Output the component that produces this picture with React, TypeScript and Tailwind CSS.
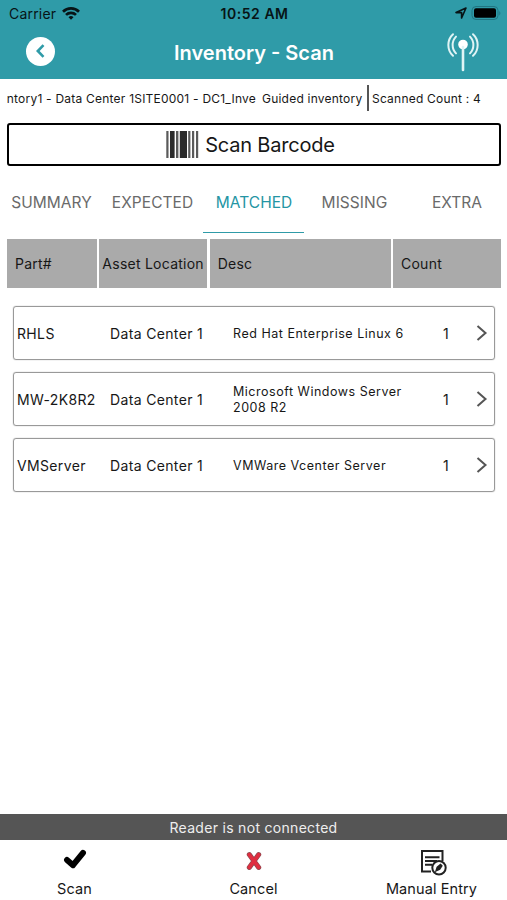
import type { ReactNode } from 'react';

type Item = { part: string; location: string; desc: string; count: number };

const TABS = ['SUMMARY', 'EXPECTED', 'MATCHED', 'MISSING', 'EXTRA'];

const ITEMS: Item[] = [
  { part: 'RHLS', location: 'Data Center 1', desc: 'Red Hat Enterprise Linux 6', count: 1 },
  { part: 'MW-2K8R2', location: 'Data Center 1', desc: 'Microsoft Windows Server 2008 R2', count: 1 },
  { part: 'VMServer', location: 'Data Center 1', desc: 'VMWare Vcenter Server', count: 1 },
];

function WifiIcon() {
  return (
    <svg width="18" height="13" viewBox="0 0 18 13" fill="none" stroke="#071416" strokeWidth="2.7">
      <path d="M1 4.7a11.5 11.5 0 0 1 16 0" />
      <path d="M4 7.9a7.2 7.2 0 0 1 10 0" />
      <path d="M6.5 10.2a3.7 3.7 0 0 1 5 0L9 12.8z" fill="#071416" stroke="none" />
    </svg>
  );
}

function StatusBar() {
  return (
    <div className="grid h-7 grid-cols-3 items-center pl-[9px] pr-[6px] text-[14px] text-[#071416]">
      <div className="flex items-center gap-[6px] pb-px">
        <span className="tracking-[0.2px]">Carrier</span>
        <WifiIcon />
      </div>
      <span className="whitespace-nowrap pr-px pb-px text-center font-semibold tracking-[0.55px]">10:52 AM</span>
      <div className="flex items-center justify-end gap-[4px] pb-[2px]">
        <svg width="12" height="12" viewBox="0 0 12 12" fill="none" stroke="#071416" strokeWidth="1.6" strokeLinejoin="round">
          <path d="M1 5.6 11 1 6.6 11V5.6z" />
        </svg>
        <svg width="30" height="14" viewBox="0 0 30 14">
          <rect x="1" y="0.5" width="26" height="13" rx="4" fill="none" stroke="#217582" />
          <rect x="3" y="2.2" width="22" height="9.6" rx="2" fill="#000" />
          <path d="M28.3 5v4.4c1.4-.8 1.4-3.6 0-4.4" fill="#217582" />
        </svg>
      </div>
    </div>
  );
}

function AntennaIcon() {
  return (
    <svg width="32" height="40" viewBox="0 0 32 40" fill="none" stroke="#e0f4f5" strokeLinecap="round">
      <circle cx="16" cy="12.5" r="4.8" fill="#fff" stroke="none" />
      <path d="M16 15v23" strokeWidth="2.6" />
      <path d="M9 4.6c-4.5 4.6-4.5 12.2 0 16.8M23 4.6c4.5 4.6 4.5 12.2 0 16.8" strokeWidth="2" />
      <path d="M6 2.2c-6.2 5.6-6.2 16 0 21.6M26 2.2c6.2 5.6 6.2 16 0 21.6" strokeWidth="2" />
    </svg>
  );
}

function BarcodeIcon() {
  return (
    <svg width="33" height="27" viewBox="0 0 33 27">
      <path fill="#2b2b2b" d="M4 0h4.6v27H4zM13.8 0h7.2v27h-7.2z" />
      <path fill="#5a5a5a" d="M.3 0h2.2v27H.3zM10 0h2.4v27H10zM22.2 0h2.2v27h-2.2zM26 0h2.2v27H26zM30 0h2.2v27H30z" />
    </svg>
  );
}

function FooterButton({ label, children }: { label: string; children: ReactNode }) {
  return (
    <button className="flex flex-col items-center">
      <span className="flex h-[26px] items-start">{children}</span>
      <span className="mt-[4px] text-[14.5px] leading-5 tracking-[0.1px]">{label}</span>
    </button>
  );
}

export default function App() {
  return (
    <div className="flex h-[900px] w-[507px] flex-col overflow-hidden bg-white font-['Inter',sans-serif] text-[#171717]">
      <header className="h-[79px] shrink-0 bg-[#2f9ba8]">
        <StatusBar />
        <div className="grid h-[48px] grid-cols-[100px_1fr_100px] items-center">
          <button className="ml-[26px] mt-[-2px] flex size-[29px] items-center justify-center rounded-full bg-white">
            <svg className="mr-px" width="9" height="14" viewBox="0 0 9 14" fill="none" stroke="#2f9ba8" strokeWidth="2.6">
              <path d="M7.5 1.2 1.8 7l5.7 5.8" />
            </svg>
          </button>
          <h1 className="pl-px pt-px text-center text-[20px] font-semibold text-white">Inventory - Scan</h1>
          <div className="ml-[40px]">
            <AntennaIcon />
          </div>
        </div>
      </header>

      <div className="flex h-[44px] shrink-0 items-center pl-[7px] pb-[6px] text-[12px] tracking-[0.22px]">
        <div className="flex w-[249px] justify-end overflow-hidden whitespace-nowrap pt-[2px]">
          <span>ntory1 - Data Center 1SITE0001 - DC1_Inve</span>
        </div>
        <span className="ml-[6px] w-[105px] whitespace-nowrap pt-[2px]">Guided inventory</span>
        <span className="h-[26px] w-[2px] bg-[#555]" />
        <span className="ml-[3px] whitespace-nowrap pt-[2px]">Scanned Count : 4</span>
      </div>

      <button className="mx-[7px] flex h-[43px] w-[494px] shrink-0 items-center justify-center gap-[6px] rounded-[3px] border-2 border-black pr-[7px] text-[20px] tracking-[-0.2px]">
        <BarcodeIcon />
        Scan Barcode
      </button>

      <nav className="mt-[6px] grid h-[61px] shrink-0 grid-cols-5 px-px text-[15.5px] tracking-[0.05px] text-[#6a6a6a]">
        {TABS.map((tab) => (
          <button
            key={tab}
            className={`border-b pt-[1px] ${
              tab === 'MATCHED' ? 'border-[#2f9ba8] pl-px text-[#2495a4]' : 'border-transparent'
            } ${tab === 'EXTRA' ? 'pl-[3px]' : ''}`}
          >
            {tab}
          </button>
        ))}
      </nav>

      <div className="mx-[7px] mt-[6px] grid h-[49px] shrink-0 grid-cols-[90px_108px_181px_108px] gap-x-[2.33px] text-[14px] tracking-[0.25px] *:flex *:items-center *:bg-[#aaa]">
        <span className="pl-[8px]">Part#</span>
        <span className="pl-[3px] whitespace-nowrap">Asset Location</span>
        <span className="pl-[8px]">Desc</span>
        <span className="pl-[8px]">Count</span>
      </div>

      <div className="mt-[18px] flex flex-col gap-[12px] px-[13px]">
        {ITEMS.map((item) => (
          <div
            key={item.part}
            className="grid h-[54px] w-[482px] grid-cols-[93px_123px_190px_35px_1fr] items-center rounded-[3px] border border-[#999] pl-[3px] text-[14px] tracking-[0.35px] shadow-[0_0_1px_#888]"
          >
            <span>{item.part}</span>
            <span>{item.location}</span>
            <span className="pt-px text-[12.5px] leading-4 tracking-[0.52px]">{item.desc}</span>
            <span className="pl-[20px]">{item.count}</span>
            <svg className="ml-[18px]" width="12" height="18" viewBox="0 0 12 18" fill="none" stroke="#555" strokeWidth="2">
              <path d="m1.5 2 8 7-8 7" />
            </svg>
          </div>
        ))}
      </div>

      <div className="mt-auto flex h-[26px] shrink-0 items-center justify-center bg-[#555] text-[14px] tracking-[0.3px] text-[#eee]">
        Reader is not connected
      </div>
      <footer className="grid h-[60px] shrink-0 grid-cols-[149px_209px_147px] pt-[9px]">
        <FooterButton label="Scan">
          <svg width="24" height="20" viewBox="0 0 24 20" fill="none" stroke="#000" strokeWidth="5.9" strokeLinecap="round" strokeLinejoin="round">
            <path d="m4 11 6 5.2L20 3.8" />
          </svg>
        </FooterButton>
        <FooterButton label="Cancel">
          <svg className="mt-[2px] ml-px" width="18" height="20" viewBox="0 0 18 20" fill="none" strokeLinecap="round">
            <path d="m4.3 3.6 9.4 12.8M13.7 3.6 4.3 16.4" stroke="#8d4a50" strokeWidth="5" />
            <path d="m4.3 3.6 9.4 12.8M13.7 3.6 4.3 16.4" stroke="#e02e40" strokeWidth="3.6" />
          </svg>
        </FooterButton>
        <FooterButton label="Manual Entry">
          <svg className="ml-[3px]" width="27" height="27" viewBox="0 0 27 27" fill="none" stroke="#222" strokeWidth="2">
            <path d="M11 22.5H2V2h20.5v10M5 8.3h14.5M5 12h12M5 15.7h7" />
            <circle cx="19" cy="18.8" r="6.7" fill="#fff" />
            <path d="m16.5 21.3 1-3 3-2.4 1 1-2 3z" fill="#222" />
          </svg>
        </FooterButton>
      </footer>
    </div>
  );
}
